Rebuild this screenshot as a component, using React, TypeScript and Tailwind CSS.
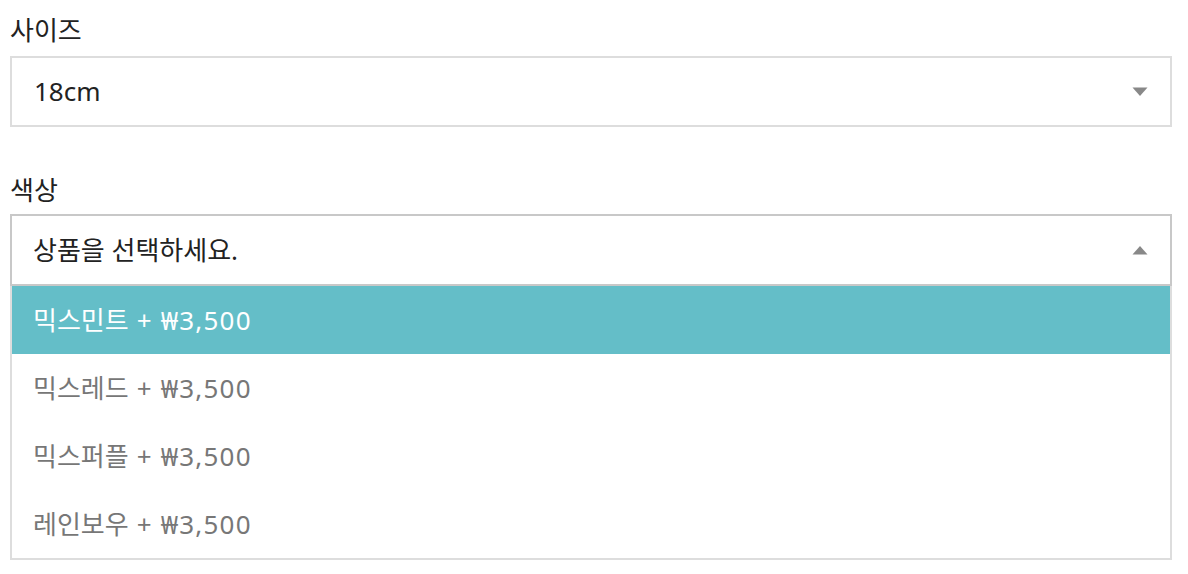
const options = ["믹스민트", "믹스레드", "믹스퍼플", "레인보우"]

function Arrow({ up }: { up?: boolean }) {
  return (
    <svg width="16" height="10" viewBox="0 0 16 10" className="shrink-0">
      <path d={up ? "M8 1 L15.5 9.5 L0.5 9.5 Z" : "M0.5 0.5 L15.5 0.5 L8 9 Z"} fill="#888888" />
    </svg>
  )
}

export default function App() {
  return (
    <div
      className="h-[574px] overflow-hidden bg-white px-[10px] pt-[10px] text-[26px]"
      style={{ fontFamily: '"Noto Sans", "Noto Sans CJK KR", sans-serif' }}
    >
      <div className="w-[1162px]">
        <label className="block leading-[40px] text-[#222]">사이즈</label>
        <div className="mt-[6px] flex h-[71px] items-center justify-between border-2 border-[#dddddd] pl-[22px] pr-[22px] text-[#222]">
          <span>18cm</span>
          <Arrow />
        </div>

        <label className="mt-[43px] block leading-[40px] text-[#222]">색상</label>
        <div className="mt-[4px]">
          <div className="flex h-[72px] items-center justify-between border-2 border-[#c8c8c8] pl-[21px] pr-[22px] text-[#222]">
            <span>상품을 선택하세요.</span>
            <Arrow up />
          </div>
          <ul className="border-x-2 border-b-2 border-[#dddddd]">
            {options.map((name, i) => (
              <li
                key={name}
                className={
                  i === 0
                    ? "flex h-[68px] items-center whitespace-pre bg-[#64bec8] pl-[21px] text-white"
                    : "flex h-[68px] items-center whitespace-pre pl-[21px] text-[#777777]"
                }
              >
                <span>{name}</span>
                <span className="tracking-[1.2px]"> + ₩3,500</span>
              </li>
            ))}
          </ul>
        </div>
      </div>
    </div>
  )
}
